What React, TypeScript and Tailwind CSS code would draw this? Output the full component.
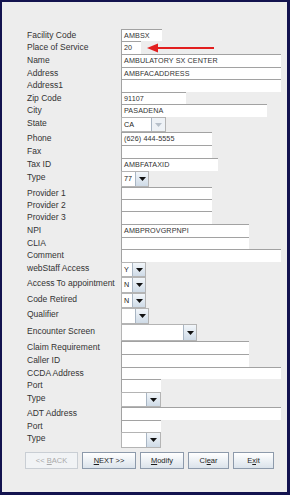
import React from "react";

/** ================= Types ================= */
type Row = {
  label: string;
  h: string; // row height class
  kind: "text" | "combo";
  w: string; // field width class
  value?: string;
  btn?: string; // arrow button width class
  disabled?: boolean;
};

/** ================= Data ================= */
const ROWS: Row[] = [
  { label: "Facility Code", h: "h-[12px]", kind: "text", w: "w-[41px]", value: "AMBSX" },
  { label: "Place of Service", h: "h-[13px]", kind: "text", w: "w-[20px]", value: "20" },
  { label: "Name", h: "h-[13px]", kind: "text", w: "w-[160px]", value: "AMBULATORY SX CENTER" },
  { label: "Address", h: "h-[12px]", kind: "text", w: "w-[160px]", value: "AMBFACADDRESS" },
  { label: "Address1", h: "h-[13px]", kind: "text", w: "w-[160px]" },
  { label: "Zip Code", h: "h-[12px]", kind: "text", w: "w-[65px]", value: "91107" },
  { label: "City", h: "h-[13px]", kind: "text", w: "w-[146px]", value: "PASADENA" },
  { label: "State", h: "h-[15px]", kind: "combo", w: "w-[45px]", value: "CA", btn: "w-[14px]", disabled: true },
  { label: "Phone", h: "h-[13px]", kind: "text", w: "w-[91px]", value: "(626) 444-5555" },
  { label: "Fax", h: "h-[13px]", kind: "text", w: "w-[91px]" },
  { label: "Tax ID", h: "h-[13px]", kind: "text", w: "w-[97px]", value: "AMBFATAXID" },
  { label: "Type", h: "h-[16px]", kind: "combo", w: "w-[28px]", value: "77", btn: "w-[13px]" },
  { label: "Provider 1", h: "h-[12px]", kind: "text", w: "w-[91px]" },
  { label: "Provider 2", h: "h-[12px]", kind: "text", w: "w-[91px]" },
  { label: "Provider 3", h: "h-[13px]", kind: "text", w: "w-[91px]" },
  { label: "NPI", h: "h-[13px]", kind: "text", w: "w-[128px]", value: "AMBPROVGRPNPI" },
  { label: "CLIA", h: "h-[12px]", kind: "text", w: "w-[128px]" },
  { label: "Comment", h: "h-[13px]", kind: "text", w: "w-[160px]" },
  { label: "webStaff Access", h: "h-[15px]", kind: "combo", w: "w-[25px]", value: "Y", btn: "w-[13px]" },
  { label: "Access To appointment", h: "h-[16px]", kind: "combo", w: "w-[25px]", value: "N", btn: "w-[13px]" },
  { label: "Code Retired", h: "h-[15px]", kind: "combo", w: "w-[25px]", value: "N", btn: "w-[13px]" },
  { label: "Qualifier", h: "h-[16px]", kind: "combo", w: "w-[28px]", btn: "w-[13px]" },
  { label: "Encounter Screen", h: "h-[17px]", kind: "combo", w: "w-[76px]", btn: "w-[13px]" },
  { label: "Claim Requirement", h: "h-[13px]", kind: "text", w: "w-[128px]" },
  { label: "Caller ID", h: "h-[13px]", kind: "text", w: "w-[128px]" },
  { label: "CCDA Address", h: "h-[12px]", kind: "text", w: "w-[160px]" },
  { label: "Port", h: "h-[13px]", kind: "text", w: "w-[40px]" },
  { label: "Type", h: "h-[15px]", kind: "combo", w: "w-[40px]", btn: "w-[14px]" },
  { label: "ADT Address", h: "h-[13px]", kind: "text", w: "w-[160px]" },
  { label: "Port", h: "h-[12px]", kind: "text", w: "w-[40px]" },
  { label: "Type", h: "h-[16px]", kind: "combo", w: "w-[40px]", btn: "w-[14px]" },
];

/** ================= Small UI Bits ================= */
const TextField: React.FC<{ r: Row }> = ({ r }) => (
  <div
    className={`${r.w} h-full bg-white border-t border-l border-[#a2a2a2] pl-[2px] flex items-center text-[7.2px] text-[#333] tracking-[0.1px] leading-none`}
  >
    {r.value}
  </div>
);

const Combo: React.FC<{ r: Row }> = ({ r }) => (
  <div className={`${r.w} h-full flex border border-[#b4b4b4] bg-white`}>
    <div className="flex-1 flex items-center pl-[2px] text-[7.2px] text-[#222] leading-none">
      {r.value}
    </div>
    <div
      className={[
        r.btn,
        "h-full flex items-center justify-center border-l border-[#a9b6c4]",
        r.disabled ? "bg-[#eef2f6]" : "bg-gradient-to-b from-[#f2f6fa] to-[#cfdbe7]",
      ].join(" ")}
    >
      <svg width="7" height="4" viewBox="0 0 7 4">
        <path d="M0 0h7L3.5 4z" fill={r.disabled ? "#b7c0ca" : "#111"} />
      </svg>
    </div>
  </div>
);

const Btn: React.FC<{ w: string; pre?: string; mn: string; post?: string; disabled?: boolean }> = ({
  w,
  pre,
  mn,
  post,
  disabled,
}) => (
  <div
    className={[
      w,
      "h-[17px] flex items-center justify-center border text-[7.5px] leading-none whitespace-pre",
      disabled
        ? "border-[#c9ced4] bg-[#f1f3f5] text-[#a9a9a9]"
        : "border-[#8d9aab] bg-gradient-to-b from-[#ffffff] to-[#dbe3eb] text-[#1c1c1c]",
    ].join(" ")}
  >
    {pre}
    <span className="underline">{mn}</span>
    {post}
  </div>
);

/** ================= Main Component ================= */
export default function App() {
  return (
    <div className="relative w-[290px] h-[495px] bg-[#ededed] border-t-2 border-l-2 border-r-[3px] border-b-[3px] border-[#13134f] pt-[27px] pl-[25px] font-['Liberation_Sans',Arial,sans-serif]">
      {ROWS.map((r, i) => (
        <div key={i} className={`${r.h} flex`}>
          <div
            className={[
              "w-[94px] flex items-center text-[8.5px] text-[#333] leading-none whitespace-nowrap",
              r.kind === "combo" ? "pb-[3px]" : "",
            ].join(" ")}
          >
            {r.label}
          </div>
          {r.kind === "text" ? <TextField r={r} /> : <Combo r={r} />}
        </div>
      ))}

      {/* Buttons */}
      <div className="flex gap-[4px] mt-[4px] -ml-[2px]">
        <Btn w="w-[53px]" pre="<< " mn="B" post="ACK" disabled />
        <Btn w="w-[54px]" mn="N" post="EXT >>" />
        <Btn w="w-[44px]" mn="M" post="odify" />
        <Btn w="w-[41px]" pre="Cl" mn="e" post="ar" />
        <Btn w="w-[41px]" pre="E" mn="x" post="it" />
      </div>

      {/* Red arrow pointing at Place of Service */}
      <svg className="absolute left-[144px] top-[41px]" width="68" height="10" viewBox="0 0 68 10">
        <path d="M10 4h58v2H10z" fill="#e21f1f" />
        <path d="M1 5L12 0.5v9z" fill="#e21f1f" />
      </svg>
    </div>
  );
}
